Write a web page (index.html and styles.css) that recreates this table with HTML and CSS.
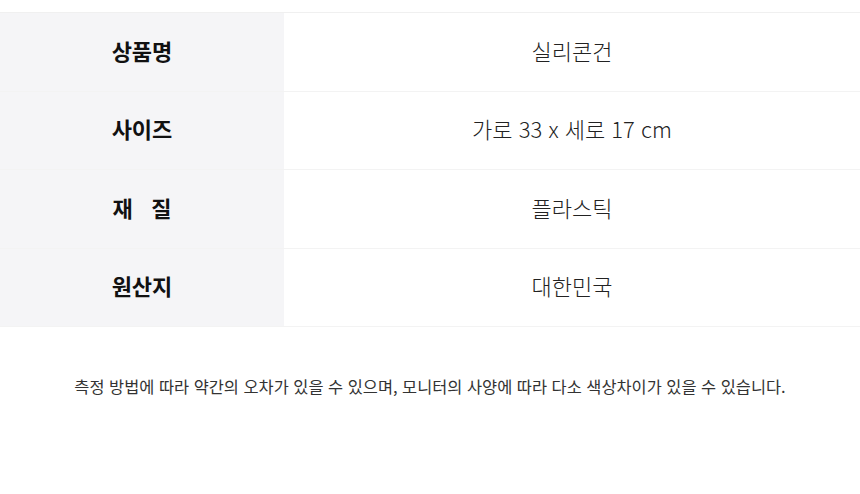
FILE: index.html
```html
<!DOCTYPE html>
<html lang="ko">
<head>
<meta charset="utf-8">
<link rel="stylesheet" href="styles.css">
</head>
<body>
<div class="page">
  <div class="spec">
    <div class="row"><div class="label">상품명</div><div class="value">실리콘건</div></div>
    <div class="row"><div class="label">사이즈</div><div class="value">가로 33 x 세로 17 cm</div></div>
    <div class="row"><div class="label">재&nbsp;&nbsp;&nbsp;질</div><div class="value">플라스틱</div></div>
    <div class="row"><div class="label">원산지</div><div class="value">대한민국</div></div>
  </div>
  <p class="note">측정 방법에 따라 약간의 오차가 있을 수 있으며, 모니터의 사양에 따라 다소 색상차이가 있을 수 있습니다.</p>
</div>
</body>
</html>
```
FILE: styles.css
```css
html, body {
  margin: 0;
  padding: 0;
  background: #ffffff;
}
.page {
  width: 860px;
  padding-top: 12px;
  font-family: "Noto Sans CJK KR", "Noto Sans", sans-serif;
}
.spec {
  border-top: 1px solid #f0f0f0;
}
.row {
  display: grid;
  grid-template-columns: 284px 1fr;
  height: 77.5px;
  border-bottom: 1px solid #f3f3f3;
}
.label {
  background: #f5f5f7;
  display: flex;
  align-items: center;
  justify-content: center;
  padding-bottom: 4px;
  font-size: 22px;
  font-weight: 700;
  color: #111;
  white-space: pre;
}
.value {
  display: flex;
  align-items: center;
  justify-content: center;
  padding-bottom: 4px;
  font-size: 22px;
  font-weight: 300;
  color: #222;
}
.note {
  margin: 47px 0 0;
  text-align: center;
  font-size: 16.4px;
  color: #333;
  letter-spacing: 0;
  font-weight: 400;
}
```
